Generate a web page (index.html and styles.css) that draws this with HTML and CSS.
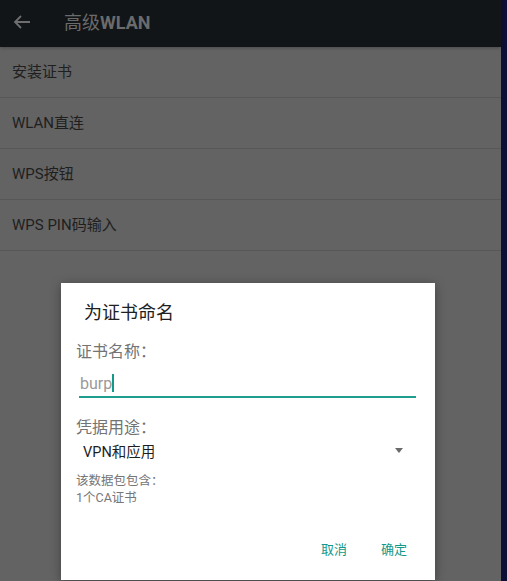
FILE: index.html
```html
<!DOCTYPE html>
<html lang="zh-CN">
<head>
<meta charset="utf-8">
<link rel="stylesheet" href="styles.css">
</head>
<body>
<div class="screen">
  <div class="app">
    <header class="appbar">
      <svg class="back" width="18" height="16" viewBox="0 0 18 16"><path d="M17 8H2M8 2L2 8l6 6" fill="none" stroke="#6e6e6e" stroke-width="1.8"/></svg>
      <span class="title">高级<b>WLAN</b></span>
    </header>
    <ul class="list">
      <li>安装证书</li>
      <li>WLAN直连</li>
      <li>WPS按钮</li>
      <li>WPS PIN码输入</li>
    </ul>
    <div class="dialog">
      <div class="d-title">为证书命名</div>
      <div class="d-label">证书名称：</div>
      <div class="d-input"><span class="val">burp</span><span class="caret"></span></div>
      <div class="d-label l2">凭据用途：</div>
      <div class="d-select"><span>VPN和应用</span><span class="tri"></span></div>
      <div class="d-info">该数据包包含：<br>1个CA证书</div>
      <div class="d-actions"><span class="btn">取消</span><span class="btn">确定</span></div>
    </div>
  </div>
  <div class="strip"></div>
</div>
</body>
</html>
```
FILE: styles.css
```css
* { box-sizing: border-box; }
html, body { margin: 0; padding: 0; }
body {
  font-family: Roboto, "Noto Sans CJK SC", sans-serif;
  width: 507px;
  height: 581px;
  overflow: hidden;
  background: #636363;
}
.screen { display: flex; height: 581px; }
.app { position: relative; width: 501px; background: #636363; }
.strip { width: 6px; background: #0e0f36; }
.appbar {
  height: 47px;
  background: #111518;
  display: flex;
  align-items: center;
  padding-left: 13px;
  box-shadow: 0 1px 3px rgba(0,0,0,0.25);
}
.back { margin-top: -4px; }
.title {
  margin-left: 33px;
  margin-top: -5px;
  font-size: 18px;
  color: #6b6b6b;
  font-weight: 400;
}
.title b { font-weight: 700; }
.list { list-style: none; margin: 0; padding: 0; }
.list li {
  height: 51px;
  line-height: 50px;
  padding-left: 12px;
  font-size: 15px;
  color: #1f1f1f;
  border-bottom: 1px solid #575757;
}
.dialog {
  position: absolute;
  left: 61px;
  top: 283px;
  width: 374px;
  height: 297px;
  background: #fff;
  box-shadow: 0 2px 10px rgba(0,0,0,0.35);
  padding: 18px 28px 0 15px;
}
.d-title {
  margin-left: 8px;
  font-size: 18px;
  line-height: 24px;
  color: #202020;
}
.d-label {
  margin-top: 16px;
  font-size: 16px;
  line-height: 22px;
  color: #737373;
}
.d-label.l2 { margin-top: 19px; }
.d-input {
  margin: 9px -9px 0 3px;
  height: 26px;
  border-bottom: 2px solid #1f9e8f;
  display: flex;
  align-items: center;
  padding-bottom: 2px;
  padding-left: 1px;
  font-size: 16px;
  color: #9a9a9a;
}
.caret { width: 2px; height: 18px; background: #13988a; margin-left: 0px; }
.d-select {
  margin: 1px 4px 0 7px;
  height: 20px;
  display: flex;
  align-items: center;
  justify-content: space-between;
  font-size: 14.5px;
  color: #1e1e1e;
}
.tri {
  width: 0; height: 0;
  border-left: 4.5px solid transparent;
  border-right: 4.5px solid transparent;
  border-top: 5px solid #6a6a6a;
  margin-top: 1px;
}
.d-info {
  margin-top: 12px;
  font-size: 12.5px;
  line-height: 17px;
  color: #767676;
}
.d-actions {
  margin-top: 34px;
  display: flex;
  justify-content: flex-end;
  gap: 34px;
}
.btn {
  font-size: 13px;
  line-height: 20px;
  color: #13988a;
}
```
